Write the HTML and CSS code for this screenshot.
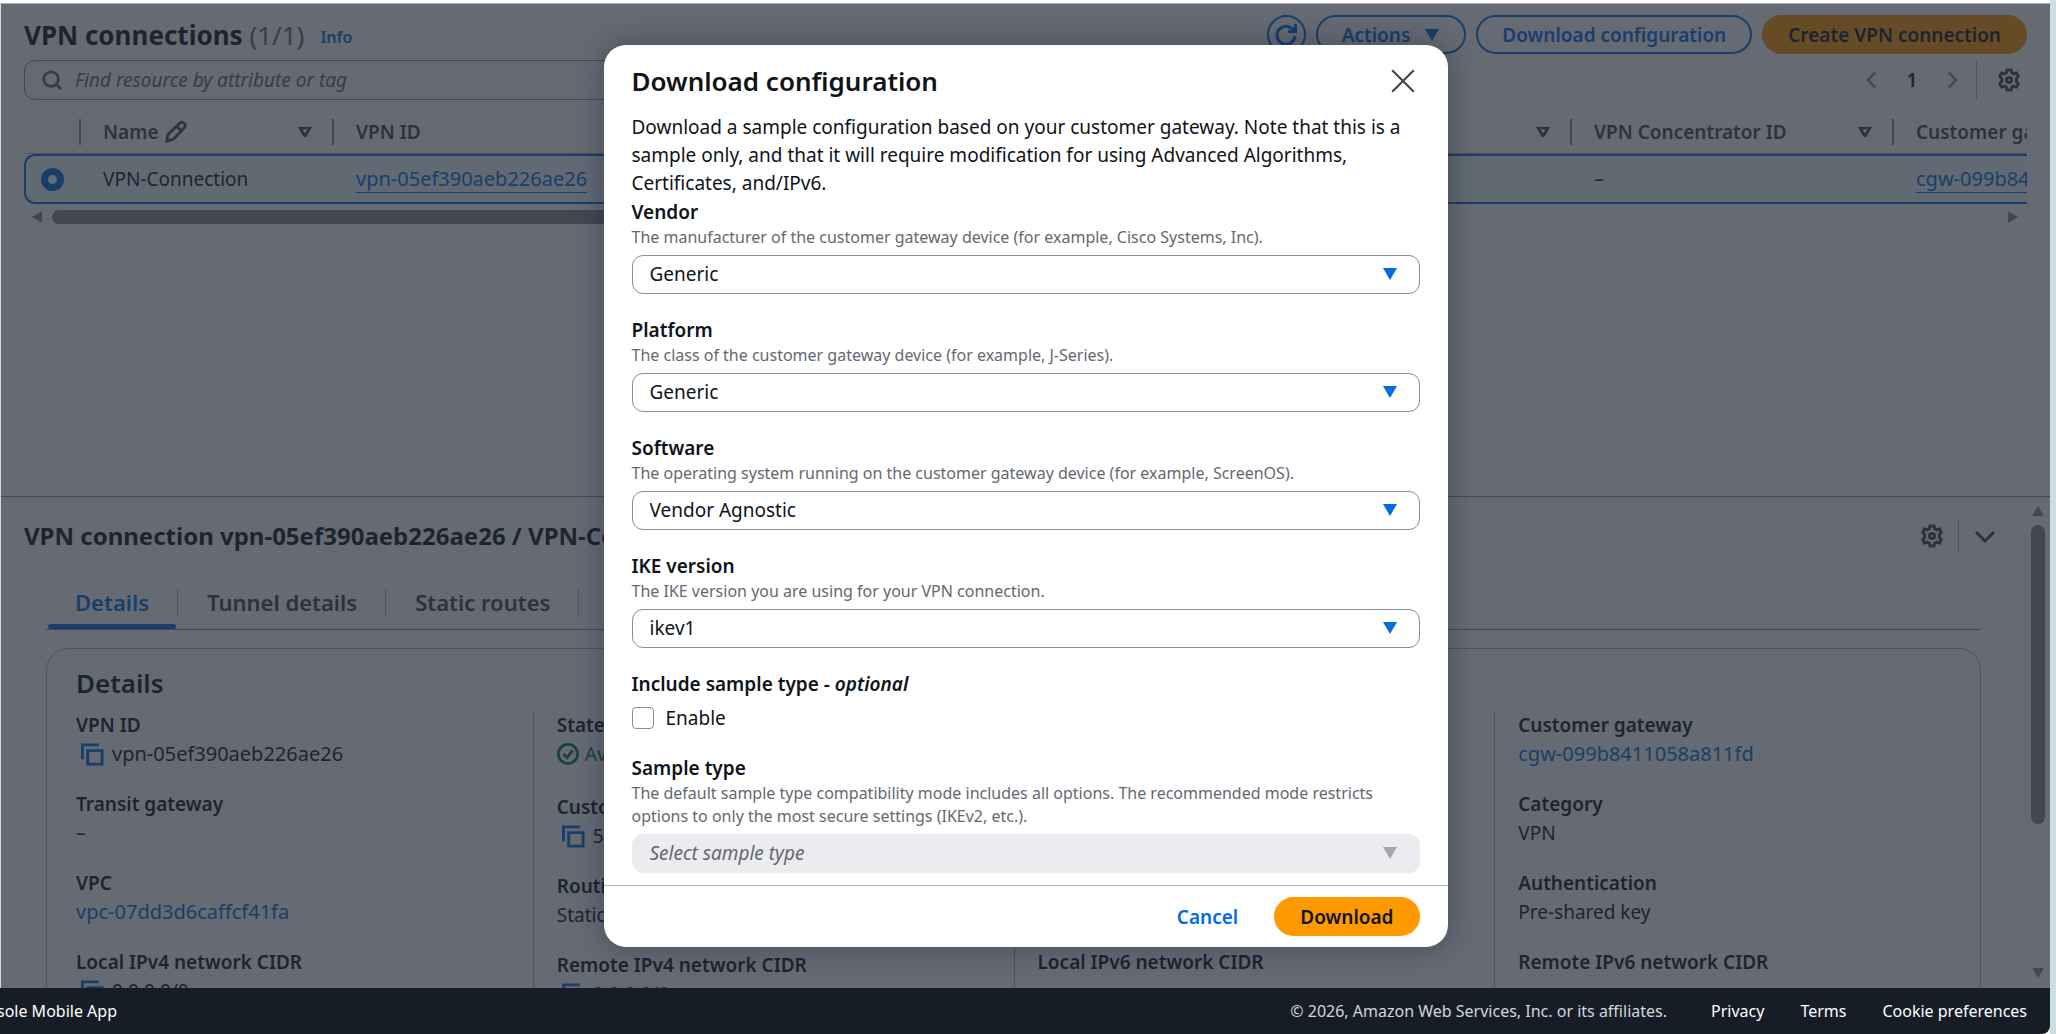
FILE: index.html
```
<!DOCTYPE html>
<html lang="en">
<head>
<meta charset="utf-8">
<title>VPN connections</title>
<link rel="stylesheet" href="styles.css">
</head>
<body>
<svg class="sprite" aria-hidden="true">
  <symbol id="gear" viewBox="0 0 24 24"><path d="M10 2h4l.7 2.7 1.9 1.1L19.300 5l2 3.500-2 2v3l2 2-2 3.500-2.700-.8-1.900 1.100L14 22h-4l-.7-2.700-1.900-1.100-2.700.8-2-3.500 2-2v-3l-2-2 2-3.500 2.700.8 1.900-1.100z"/><circle cx="12" cy="12" r="2.600"/></symbol>
  <symbol id="copy" viewBox="0 0 24 24"><path d="M1.500 17V2h17"/><path d="M7 8h15v14H7z"/></symbol>
  <symbol id="down" viewBox="0 0 16 14"><path d="M1 1h14L8 13z"/></symbol>
</svg>
<div class="app">
  <main class="main">
    <section class="list">
      <header class="list-head">
        <h1 class="title">VPN connections <span class="count">(1/1)</span></h1>
        <a class="info" href="#">Info</a>
        <div class="actions">
          <button class="btn round" aria-label="Refresh"><svg class="icon" viewBox="0 0 24 24"><path d="M21 13a9 9 0 1 1-3-7.500L21 8"/><path d="M21.500 1v7.500H14"/></svg></button>
          <button class="btn">Actions <svg class="caret"><use href="#down"/></svg></button>
          <button class="btn">Download configuration</button>
          <button class="btn primary">Create VPN connection</button>
        </div>
      </header>
      <div class="filter-row">
        <label class="search"><svg class="icon" viewBox="0 0 24 24"><circle cx="11" cy="11" r="8"/><path d="M17 17l5 5"/></svg><input type="text" placeholder="Find resource by attribute or tag" aria-label="Find resource"></label>
        <nav class="pager">
          <button class="plain faint" aria-label="Previous"><svg class="icon" viewBox="0 0 24 24"><path d="M16 3l-9 9 9 9"/></svg></button>
          <span class="page">1</span>
          <button class="plain faint" aria-label="Next"><svg class="icon" viewBox="0 0 24 24"><path d="M8 3l9 9-9 9"/></svg></button>
          <button class="plain settings" aria-label="Preferences"><svg class="icon"><use href="#gear"/></svg></button>
        </nav>
      </div>
      <div class="table-wrap">
        <table class="table">
          <colgroup><col class="c-pick"><col class="c-name"><col class="c-id"><col class="c-conc"><col class="c-cgw"></colgroup>
          <thead><tr>
            <th></th>
            <th><div class="th">Name <svg class="icon pencil" viewBox="0 0 24 24"><path d="M2 22l1-7L16 2.500a3.500 3.500 0 0 1 5 5L9 20z M13 6l5 5"/></svg><svg class="caret sort"><use href="#down"/></svg></div></th>
            <th><div class="th">VPN ID <svg class="caret sort"><use href="#down"/></svg></div></th>
            <th><div class="th">VPN Concentrator ID <svg class="caret sort"><use href="#down"/></svg></div></th>
            <th><div class="th">Customer gateway</div></th>
          </tr></thead>
          <tbody><tr>
            <td class="pick"><input type="radio" class="radio" checked aria-label="VPN-Connection"></td>
            <td>VPN-Connection</td>
            <td><a class="link id" href="#">vpn-05ef390aeb226ae26</a></td>
            <td>–</td>
            <td><a class="link id" href="#">cgw-099b8411058a811fd</a></td>
          </tr></tbody>
        </table>
      </div>
      <div class="hscroll"><svg class="arrow" viewBox="0 0 10 12"><path d="M10 0v12L0 6z"/></svg><div class="htrack"><div class="hthumb"></div></div><svg class="arrow" viewBox="0 0 10 12"><path d="M0 0v12l10-6z"/></svg></div>
    </section>

    <section class="panel">
      <div class="panel-body">
        <header class="panel-head">
          <h2 class="panel-title">VPN connection vpn-05ef390aeb226ae26 / VPN-Connection</h2>
          <div class="panel-tools">
            <button class="plain" aria-label="Panel preferences"><svg class="icon"><use href="#gear"/></svg></button>
            <button class="plain fold" aria-label="Close panel"><svg class="icon" viewBox="0 0 24 24"><path d="M3 8l9 9 9-9"/></svg></button>
          </div>
        </header>
        <nav class="tabs">
          <a class="tab active" href="#">Details</a>
          <a class="tab" href="#">Tunnel details</a>
          <a class="tab" href="#">Static routes</a>
        </nav>
        <div class="card">
          <h3 class="card-title">Details</h3>
          <div class="details">
            <dl class="col">
              <div><dt>VPN ID</dt><dd class="copy id"><svg class="icon"><use href="#copy"/></svg>vpn-05ef390aeb226ae26</dd></div>
              <div><dt>Transit gateway</dt><dd>–</dd></div>
              <div><dt>VPC</dt><dd><a class="id" href="#">vpc-07dd3d6caffcf41fa</a></dd></div>
              <div><dt>Local IPv4 network CIDR</dt><dd class="copy"><svg class="icon"><use href="#copy"/></svg>0.0.0.0/0</dd></div>
            </dl>
            <dl class="col">
              <div class="tall"><dt>State</dt><dd class="ok"><svg class="icon" viewBox="0 0 24 24"><circle cx="12" cy="12" r="10.500"/><path d="M7 12l4 4 6-8"/></svg>Available</dd></div>
              <div><dt>Customer gateway address</dt><dd class="copy"><svg class="icon"><use href="#copy"/></svg>5</dd></div>
              <div><dt>Routing</dt><dd>Static</dd></div>
              <div><dt>Remote IPv4 network CIDR</dt><dd class="copy"><svg class="icon"><use href="#copy"/></svg>0.0.0.0/0</dd></div>
            </dl>
            <dl class="col">
              <div class="last"><dt>Local IPv6 network CIDR</dt><dd>–</dd></div>
            </dl>
            <dl class="col">
              <div><dt>Customer gateway</dt><dd><a class="id" href="#">cgw-099b8411058a811fd</a></dd></div>
              <div><dt>Category</dt><dd>VPN</dd></div>
              <div><dt>Authentication</dt><dd>Pre-shared key</dd></div>
              <div><dt>Remote IPv6 network CIDR</dt><dd>–</dd></div>
            </dl>
          </div>
        </div>
      </div>
      <div class="vscroll"><svg class="arrow up" viewBox="0 0 12 10"><path d="M0 10h12L6 0z"/></svg><div class="vtrack"><div class="vthumb"></div></div><svg class="arrow up" viewBox="0 0 12 10"><path d="M0 0h12L6 10z"/></svg></div>
    </section>

    <div class="backdrop">
      <form class="modal" role="dialog" aria-labelledby="dlg">
        <header class="modal-head"><h2 class="modal-title" id="dlg">Download configuration</h2><button type="button" class="plain close" aria-label="Close"><svg class="icon" viewBox="0 0 24 24"><path d="M2 2l20 20M22 2L2 22"/></svg></button></header>
        <div class="modal-body">
          <p class="intro">Download a sample configuration based on your customer gateway. Note that this is a sample only, and that it will require modification for using Advanced Algorithms, Certificates, and/IPv6.</p>
          <div class="field"><label for="vendor">Vendor</label><p class="hint">The manufacturer of the customer gateway device (for example, Cisco Systems, Inc).</p><div class="select"><select id="vendor"><option>Generic</option></select><svg class="caret"><use href="#down"/></svg></div></div>
          <div class="field"><label for="platform">Platform</label><p class="hint">The class of the customer gateway device (for example, J-Series).</p><div class="select"><select id="platform"><option>Generic</option></select><svg class="caret"><use href="#down"/></svg></div></div>
          <div class="field"><label for="software">Software</label><p class="hint">The operating system running on the customer gateway device (for example, ScreenOS).</p><div class="select"><select id="software"><option>Vendor Agnostic</option></select><svg class="caret"><use href="#down"/></svg></div></div>
          <div class="field"><label for="ike">IKE version</label><p class="hint">The IKE version you are using for your VPN connection.</p><div class="select"><select id="ike"><option>ikev1</option></select><svg class="caret"><use href="#down"/></svg></div></div>
          <div class="field"><span class="legend">Include sample type - <i>optional</i></span><label class="check"><input type="checkbox">Enable</label></div>
          <div class="field"><label for="sample">Sample type</label><p class="hint">The default sample type compatibility mode includes all options. The recommended mode restricts options to only the most secure settings (IKEv2, etc.).</p><div class="select off"><select id="sample" disabled><option>Select sample type</option></select><svg class="caret"><use href="#down"/></svg></div></div>
        </div>
        <footer class="modal-foot"><button type="button" class="btn text">Cancel</button><button type="button" class="btn primary">Download</button></footer>
      </form>
    </div>
  </main>
  <footer class="footer">
    <div class="foot-left"><a href="#">Console Mobile App</a></div>
    <div class="foot-right"><span class="copyright">© 2026, Amazon Web Services, Inc. or its affiliates.</span><a href="#">Privacy</a><a href="#">Terms</a><a href="#">Cookie preferences</a></div>
  </footer>
</div>
</body>
</html>
```
FILE: styles.css
```
* { box-sizing: border-box; }
body {
  margin: 0;
  background: #c8e0e3;
  color: #0f141a;
  font: 19px/28px "Noto Sans", sans-serif;
}
h1, h2, h3, p, dl, dd { margin: 0; }
a { color: #006ce0; text-decoration: none; }
button, input, select { font: inherit; color: inherit; }
.sprite { position: absolute; width: 0; height: 0; }

.icon { width: 22px; height: 22px; flex: none; fill: none; stroke: currentColor; stroke-width: 3; }
.caret { width: 16px; height: 14px; flex: none; fill: currentColor; }
.id { font-size: 20px; }

.app { display: flex; flex-direction: column; height: 100vh; margin-right: 6px; background: #fff; }
.main {
  position: relative;
  flex: 1;
  min-height: 0;
  display: grid;
  grid-template-rows: minmax(0, 1fr) minmax(0, 1fr);
  margin-top: 3px;
  border-top: 1px solid #a9acb1;
  border-left: 1px solid #d5d7da;
}

/* Buttons */
.btn {
  display: flex;
  align-items: center;
  gap: 14px;
  height: 39px;
  padding: 0 24px;
  border: 2px solid #006ce0;
  border-radius: 20px;
  background: none;
  color: #006ce0;
  font-weight: 600;
  white-space: nowrap;
}
.btn.primary { background: #f90; border-color: #f90; color: #0f141a; }
.btn.text { border-color: transparent; }
.btn.round { width: 39px; padding: 0; justify-content: center; }
.btn.round .icon { width: 24px; height: 24px; }
.plain { display: flex; align-items: center; justify-content: center; padding: 0; border: 0; background: none; color: #424650; }
.faint { color: #8c8c94; }

/* Resource list */
.list { min-width: 0; padding: 11px 23px 0; overflow: hidden; }
.list-head { display: flex; align-items: center; height: 39px; }
.title { font-size: 26px; font-weight: 700; }
.count { font-weight: 400; color: #656871; }
.info { margin: 4px 0 0 16px; font-size: 16px; font-weight: 600; }
.actions { display: flex; gap: 10px; margin-left: auto; }
.filter-row { display: flex; align-items: center; justify-content: space-between; margin-top: 6px; }
.search {
  display: flex;
  align-items: center;
  gap: 12px;
  width: 50%;
  height: 40px;
  padding: 0 16px;
  border: 1px solid #8c8c94;
  border-radius: 11px;
  color: #656871;
}
.search input { flex: 1; border: 0; padding: 0; background: none; outline: 0; }
.search input::placeholder { color: #656871; font-style: italic; opacity: 1; }
.pager { display: flex; align-items: center; }
.pager .icon { width: 20px; height: 20px; }
.page { width: 60px; text-align: center; font-weight: 600; }
.settings { height: 40px; margin-left: 14px; padding: 0 6px 0 20px; border-left: 1px solid #b4b4bb; }
.pager .settings .icon { width: 24px; height: 24px; }

.table-wrap { overflow: hidden; }
.table { width: 2200px; table-layout: fixed; border-collapse: separate; border-spacing: 0; }
.c-pick { width: 55px; }
.c-name { width: 253px; }
.c-id { width: 1238px; }
.c-conc { width: 322px; }
th { height: 54px; padding: 10px 0 0; text-align: left; font-weight: 600; color: #424650; border-bottom: 1px solid #b4b4bb; }
.th { display: flex; align-items: center; height: 26px; padding: 0 20px 0 22px; border-left: 2px solid #8c8c94; }
.pencil { margin-left: 6px; }
.sort { margin-left: auto; fill: none; stroke: currentColor; stroke-width: 4; overflow: visible; height: 10px; width: 14px; }
td { height: 50px; padding: 0 0 0 24px; background: #f0fbff; border-top: 2px solid #006ce0; border-bottom: 2px solid #006ce0; }
td.pick { padding: 0 0 0 15px; border-left: 2px solid #006ce0; border-radius: 11px 0 0 11px; }
.link { border-bottom: 1px solid #006ce0; }
.radio { display: block; appearance: none; width: 23px; height: 23px; margin: 0; border: 7px solid #006ce0; border-radius: 50%; background: #fff; }

.arrow { width: 10px; height: 12px; flex: none; fill: #8b8b8b; }
.hscroll { display: flex; align-items: center; gap: 10px; padding: 6px 9px 0 8px; }
.htrack { flex: 1; }
.hthumb { width: 60%; height: 14px; border-radius: 7px; background: #8b8b8b; }

/* Split panel */
.panel { min-width: 0; display: flex; border-top: 1px solid #8c8c94; overflow: hidden; }
.panel-body { flex: 1; min-width: 0; padding: 0 23px; overflow: hidden; }
.panel-head { display: flex; align-items: center; justify-content: space-between; height: 78px; }
.panel-title { font-size: 24px; font-weight: 700; white-space: nowrap; }
.panel-tools { display: flex; align-items: center; margin-right: 6px; }
.panel-tools .icon { width: 24px; height: 24px; }
.fold { height: 34px; margin-left: 14px; padding-left: 14px; border-left: 1px solid #b4b4bb; }
.tabs { display: flex; margin: 0 22px; border-bottom: 1px solid #8c8c94; }
.tab { position: relative; height: 54px; padding: 13px 29px 0; color: #424650; font-size: 22px; font-weight: 600; }
.tab::after { content: ""; position: absolute; right: 0; top: 13px; height: 27px; border-right: 1px solid #b4b4bb; }
.tab.active { color: #006ce0; }
.tab.active::before { content: ""; position: absolute; left: 2px; right: 2px; bottom: 0; height: 5px; border-radius: 3px; background: #006ce0; }
.card { margin: 18px 22px 0; padding: 18px 29px; border: 1px solid #b4b4bb; border-radius: 22px; }
.card-title { font-size: 26px; line-height: 32px; font-weight: 600; }
.details { display: grid; grid-template-columns: repeat(4, 1fr); gap: 48px; margin-top: 12px; }
.col { display: grid; grid-template-rows: repeat(4, minmax(79px, auto)); align-content: start; }
.col + .col { margin-left: -24px; padding-left: 23px; border-left: 1px solid #b4b4bb; }
.tall { min-height: 82px; }
.last { grid-row: 4; }
dt { font-weight: 600; white-space: nowrap; }
dd { display: flex; align-items: center; gap: 8px; height: 30px; white-space: nowrap; }
.copy { padding-left: 5px; }
.copy .icon { color: #006ce0; width: 23px; height: 23px; }
.ok { color: #00802f; gap: 6px; }
.vscroll { display: flex; flex-direction: column; align-items: center; width: 24px; padding: 9px 0 10px; }
.up { width: 12px; height: 10px; }
.vtrack { flex: 1; padding: 9px 0; }
.vthumb { width: 14px; height: 69%; border-radius: 7px; background: #8b8b8b; }

/* Dialog */
.backdrop { position: absolute; inset: 0; display: flex; align-items: flex-start; justify-content: center; padding-top: 41px; background: rgba(35, 43, 55, .7); }
.modal { width: 844px; border-radius: 22px; background: #fff; box-shadow: 0 0 28px 3px rgba(0, 7, 22, .25); }
.modal-head { display: flex; align-items: center; justify-content: space-between; height: 68px; padding: 4px 32px 0 28px; }
.modal-title { font-size: 26px; font-weight: 600; }
.close .icon { width: 26px; height: 26px; stroke-width: 2; }
.modal-body { padding: 0 28px 12px; }
.intro { margin-bottom: 1px; }
.field + .field { margin-top: 22px; }
.field > label, .legend { display: block; font-weight: 600; }
.hint { margin-bottom: 6px; color: #656871; font-size: 16px; line-height: 23px; }
.select { position: relative; height: 39px; }
.select select { appearance: none; display: block; width: 100%; height: 39px; padding: 0 40px 2px 17px; border: 1px solid #8c8c94; border-radius: 11px; background: #fff; color: #0f141a; }
.select .caret { position: absolute; right: 22px; top: 12px; color: #006ce0; pointer-events: none; }
.select.off select { border-color: #ebebf0; background: #ebebf0; color: #656871; font-style: italic; opacity: 1; }
.select.off .caret { color: #a6a6ad; }
.field .check { display: flex; align-items: center; gap: 12px; margin-top: 6px; font-weight: 400; }
.check input { appearance: none; width: 22px; height: 22px; margin: 0; border: 1px solid #8c8c94; border-radius: 4px; background: #fff; }
.modal-foot { display: flex; justify-content: flex-end; gap: 10px; padding: 11px 28px; border-top: 1px solid #b4b4bb; }

/* Console footer */
.footer { display: flex; justify-content: space-between; align-items: center; height: 46px; padding-right: 23px; background: #161d26; border-bottom-right-radius: 8px; font-size: 16px; }
.footer a { color: #fff; }
.foot-left { display: flex; justify-content: flex-end; width: 117px; overflow: hidden; white-space: nowrap; }
.foot-right { display: flex; gap: 36px; }
.copyright { margin-right: 8px; color: #d5d5d9; }
```
